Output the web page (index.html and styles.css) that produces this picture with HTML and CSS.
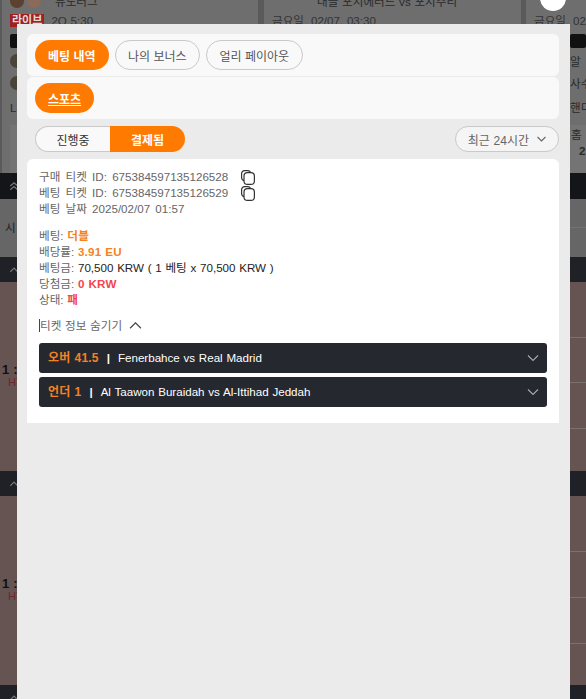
FILE: index.html
```html
<!DOCTYPE html>
<html lang="ko">
<head>
  <meta charset="UTF-8" />
  <meta name="viewport" content="width=device-width, initial-scale=1.0" />
  <title>베팅 내역</title>
  <link rel="stylesheet" href="styles.css">
</head>
<body>
  <div class="page">
    <div class="cards">
      <div class="match">
        <div class="match-team"><span class="ball ball-dark"></span><span class="ball ball-light"></span><span class="team-name">뉴노러그</span></div>
        <div class="match-time"><span class="live">라이브</span><span>2Q 5:30</span></div>
        <div class="match-row match-row-first"><span class="tile"></span></div>
        <div class="match-row"><span class="ball ball-small"></span></div>
        <div class="match-row"><span class="ball ball-small"></span></div>
        <div class="match-row match-row-tall">L</div>
        <div class="match-box"></div>
      </div>
      <div class="match">
        <div class="match-team match-team-wide"><span class="team-name">대슬 포시에러드 vs 포시주리</span></div>
        <div class="match-time"><span>금요일, 02/07, 03:30</span></div>
      </div>
      <div class="match match-last">
        <div class="match-team"><span class="ball ball-white"></span></div>
        <div class="match-time"><span>금요일, 02/07</span></div>
        <div class="match-row match-row-first match-row-side"><span class="tile"></span></div>
        <div class="match-row match-row-side">알</div>
        <div class="match-row match-row-side">사수</div>
        <div class="match-row match-row-tall match-row-side">핸디</div>
        <div class="match-box match-box-side">홈<br><b>2</b></div>
      </div>
    </div>
    <div class="bar bar-black"><svg class="bar-icon" viewBox="0 0 16 16"><path d="M2 8l6-5 6 5M2 14l6-5 6 5"/></svg></div>
    <div class="gray">
      <span class="gray-text">시</span>
      <div class="side">
        <div class="side-cell side-28"></div>
        <div class="side-cell side-last"></div>
      </div>
    </div>
    <div class="bar"><svg class="bar-icon" viewBox="0 0 16 16"><path d="M2 11l6-6 6 6"/></svg></div>
    <div class="brown">
      <div class="score"><b>1 :</b><span>HT</span></div>
      <div class="side">
        <div class="side-cell side-56"></div>
        <div class="side-cell side-45"></div>
        <div class="side-cell side-46"></div>
        <div class="side-cell side-last"></div>
      </div>
    </div>
    <div class="bar"><svg class="bar-icon" viewBox="0 0 16 16"><path d="M2 11l6-6 6 6"/></svg></div>
    <div class="brown">
      <div class="score"><b>1 :</b><span>HT</span></div>
      <div class="side">
        <div class="side-cell side-55"></div>
        <div class="side-cell side-46"></div>
        <div class="side-cell side-46"></div>
        <div class="side-cell side-last"></div>
      </div>
    </div>
    <div class="bar"><svg class="bar-icon" viewBox="0 0 16 16"><path d="M2 11l6-6 6 6"/></svg></div>
  </div>

  <div class="modal">
    <div class="tab-panel">
      <a class="pill pill-on">베팅 내역</a>
      <a class="pill">나의 보너스</a>
      <a class="pill">얼리 페이아웃</a>
    </div>
    <div class="tab-panel">
      <a class="pill pill-on pill-link">스포츠</a>
    </div>

    <div class="filter-row">
      <div class="segment">
        <span class="segment-item">진행중</span>
        <span class="segment-item segment-on">결제됨</span>
      </div>
      <div class="range">최근 24시간
        <svg class="chevron" viewBox="0 0 9 6"><path d="M.5 1l4 4 4-4"/></svg>
      </div>
    </div>

    <div class="ticket">
      <div class="id-line">구매 티켓 ID: 675384597135126528
        <svg class="copy" viewBox="0 0 14 15"><rect x="0.6" y="0.6" width="9" height="10" rx="3"/><rect x="3" y="2.6" width="10.4" height="11.8" rx="3.5"/></svg>
      </div>
      <div class="id-line">베팅 티켓 ID: 675384597135126529
        <svg class="copy" viewBox="0 0 14 15"><rect x="0.6" y="0.6" width="9" height="10" rx="3"/><rect x="3" y="2.6" width="10.4" height="11.8" rx="3.5"/></svg>
      </div>
      <div class="id-line">베팅 날짜 2025/02/07 01:57</div>

      <div class="info">
        <div>베팅: <b class="orange">더블</b></div>
        <div>배당률: <b class="orange">3.91 EU</b></div>
        <div>베팅금: <span class="dark">70,500 KRW ( 1 베팅 x 70,500 KRW )</span></div>
        <div>당첨금: <b class="red">0 KRW</b></div>
        <div>상태: <b class="red">패</b></div>
      </div>

      <div class="toggle"><span class="toggle-text">티켓 정보 숨기기</span>
        <svg class="chevron chevron-dark" viewBox="0 0 12 8"><path d="M1 6.5l5-5 5 5"/></svg>
      </div>

      <div class="leg">
        <span class="leg-text"><b class="leg-pick">오버 41.5</b><span class="leg-sep">|</span>Fenerbahce vs Real Madrid</span>
        <svg class="chevron chevron-light" viewBox="0 0 12 8"><path d="M1 1.5l5 5 5-5"/></svg>
      </div>
      <div class="leg">
        <span class="leg-text"><b class="leg-pick">언더 1</b><span class="leg-sep">|</span>Al Taawon Buraidah vs Al-Ittihad Jeddah</span>
        <svg class="chevron chevron-light" viewBox="0 0 12 8"><path d="M1 1.5l5 5 5-5"/></svg>
      </div>
    </div>
  </div>
</body>
</html>
```

FILE: styles.css
```css
* {
  box-sizing: border-box;
}
html, body {
  margin: 0;
  height: 100%;
  overflow: hidden;
}
body {
  font-family: "Liberation Sans", "Noto Sans CJK KR", sans-serif;
  font-size: 11.6px;
  word-spacing: 0.5px;
  background-color: #6b6b6b;
  color: #111;
}

/* page behind the modal */
.page {
  height: 699px;
  overflow: hidden;
}
.cards {
  display: flex;
  gap: 6px;
  height: 173px;
  padding-left: 2px;
  background-color: #5a5a5a;
}
.match {
  width: 256px;
  flex: none;
  padding: 0 8px;
  background-color: #6e6e6e;
  color: #2a2a2a;
}
.match + .match {
  width: 257px;
}
.match.match-last {
  width: 70px;
  margin-left: -1px;
  white-space: nowrap;
}
.match-team {
  display: flex;
  align-items: center;
  height: 10px;
}
.match-team-wide {
  padding-left: 45px;
}
.team-name {
  margin: -8px 0 0 11px;
}
.match-team-wide .team-name {
  margin-left: 0;
}
.ball {
  width: 14px;
  height: 14px;
  margin: -8px 3px 0 0;
  border-radius: 50%;
}
.ball-dark {
  background-color: #5c4030;
}
.ball-light {
  background-color: #8a6a5a;
}
.ball-small {
  margin: 0;
  background-color: #4a4438;
}
.ball-white {
  width: 26px;
  height: 26px;
  margin: -14px 0 0 6px;
  background-color: #fff;
}
.match-time {
  display: flex;
  align-items: center;
  gap: 7px;
  height: 16px;
  margin-top: 2px;
  color: #333;
}
.live {
  padding: 0 2px;
  background-color: #a02020;
  color: #ddd;
  font-weight: 700;
  font-size: 11px;
  line-height: 13px;
}
.match-row {
  display: flex;
  align-items: center;
  height: 22px;
}
.match-row-first {
  height: 19px;
  margin-top: 3px;
}
.match-row-tall {
  height: 26px;
}
.match-row-side {
  padding-left: 36px;
}
.tile {
  width: 16px;
  height: 14px;
  border-radius: 2px;
  background-color: #111;
}
.match-box {
  height: 48px;
  margin-top: 5px;
  background-color: #747474;
}
.match-box-side {
  margin-left: 36px;
  padding: 2px 0 0 1px;
  line-height: 16px;
}
.match-box-side b {
  padding-left: 8px;
}
.bar {
  display: flex;
  align-items: center;
  height: 25px;
  padding-left: 9px;
  background-color: #1f2126;
}
.bar-black {
  height: 26px;
  background-color: #131518;
}
.bar-icon {
  width: 10px;
  height: 10px;
  fill: none;
  stroke: #777;
  stroke-width: 2;
}
.gray {
  display: flex;
  align-items: center;
  justify-content: space-between;
  height: 58px;
  padding-left: 5px;
  background-color: #666;
  color: #222;
}
.gray-text {
  margin-top: -2px;
  padding-right: 1px;
  border-right: 1px solid #333;
}
.brown {
  display: flex;
  align-items: center;
  justify-content: space-between;
  height: 189px;
  padding-left: 2px;
  background-color: #665453;
}
.side {
  display: flex;
  flex-direction: column;
  align-self: stretch;
  width: 16px;
}
.side-cell {
  border-bottom: 1px solid #7a7070;
}
.side-28 {
  height: 29px;
}
.side-45 {
  height: 45px;
}
.side-46 {
  height: 46px;
}
.side-55 {
  height: 56px;
}
.side-56 {
  height: 56px;
}
.side-last {
  flex: 1;
  border-bottom: 0;
}
.score {
  margin-top: -2px;
  font-size: 13px;
  line-height: 13px;
}
.score span {
  display: block;
  padding-left: 6px;
  color: #6a2a2a;
  font-size: 11px;
}

/* modal */
.modal {
  position: fixed;
  top: 24px;
  left: 17px;
  bottom: 0;
  width: 553px;
  padding: 10px 11px 0 10px;
  background-color: #ebebeb;
}
.tab-panel {
  display: flex;
  gap: 6px;
  height: 42px;
  margin-bottom: 1px;
  padding: 6px 8px;
  border-radius: 6px;
  background-color: #f9f9f9;
}
.pill {
  display: flex;
  align-items: center;
  height: 30px;
  padding: 0 12.5px;
  border: 1px solid #c9c9c9;
  border-radius: 15px;
  color: #555;
  font-size: 12px;
  word-spacing: 0;
}
.pill-on {
  padding: 0 13px;
  border: 0;
  background-color: #ff7a00;
  color: #fff;
  font-weight: 700;
}
.pill-link {
  text-decoration: underline;
}
.filter-row {
  display: flex;
  justify-content: space-between;
  align-items: center;
  height: 26px;
  margin: 7px 0;
  padding-left: 8px;
}
.segment {
  display: flex;
  width: 150px;
  height: 26px;
  font-size: 12px;
}
.segment-item {
  display: flex;
  align-items: center;
  justify-content: center;
  width: 75px;
  border: 1px solid #c9c9c9;
  border-right: 0;
  border-radius: 13px 0 0 13px;
  background-color: #f9f9f9;
  color: #333;
}
.segment-on {
  border: 0;
  border-radius: 0 13px 13px 0;
  background-color: #ff7a00;
  color: #fff;
  font-weight: 700;
}
.range {
  display: flex;
  align-items: center;
  gap: 8px;
  height: 26px;
  padding: 0 12px;
  border: 1px solid #c9c9c9;
  border-radius: 13px;
  background-color: #f5f5f5;
  color: #666;
  font-size: 12px;
}
.chevron {
  width: 9px;
  height: 6px;
  fill: none;
  stroke: #666;
  stroke-width: 1.1;
}
.chevron-dark {
  width: 13px;
  height: 9px;
  stroke: #444;
}
.chevron-light {
  width: 12px;
  height: 8px;
  stroke: #aaa;
}

/* ticket card */
.ticket {
  height: 264px;
  padding: 10px 12px 0;
  border-radius: 6px 6px 0 0;
  background-color: #fff;
  color: #666;
  line-height: 16px;
}
.id-line {
  display: flex;
  align-items: center;
  height: 16px;
  word-spacing: 2px;
}
.copy {
  width: 14px;
  height: 15px;
  margin-left: 13px;
  fill: #fff;
  stroke: #333;
  stroke-width: 1.2;
}
.info {
  margin-top: 11px;
}
.orange {
  color: #f58220;
  letter-spacing: 0.2px;
}
.red {
  color: #f4444f;
  letter-spacing: 0.2px;
}
.dark {
  color: #222;
}
.toggle {
  display: flex;
  align-items: center;
  gap: 7px;
  height: 16px;
  margin-top: 9px;
}
.toggle-text {
  border-left: 1px solid #444;
  line-height: 13px;
}
.leg {
  display: flex;
  align-items: center;
  justify-content: space-between;
  height: 30px;
  margin-top: 4px;
  padding: 0 8px 0 9px;
  border-radius: 3px;
  background-color: #262830;
  color: #fff;
}
.toggle + .leg {
  margin-top: 10px;
}
.leg-pick {
  color: #f58220;
  font-size: 12px;
  letter-spacing: 0.2px;
}
.leg-sep {
  margin: 0 8px;
  font-weight: 700;
}
```
